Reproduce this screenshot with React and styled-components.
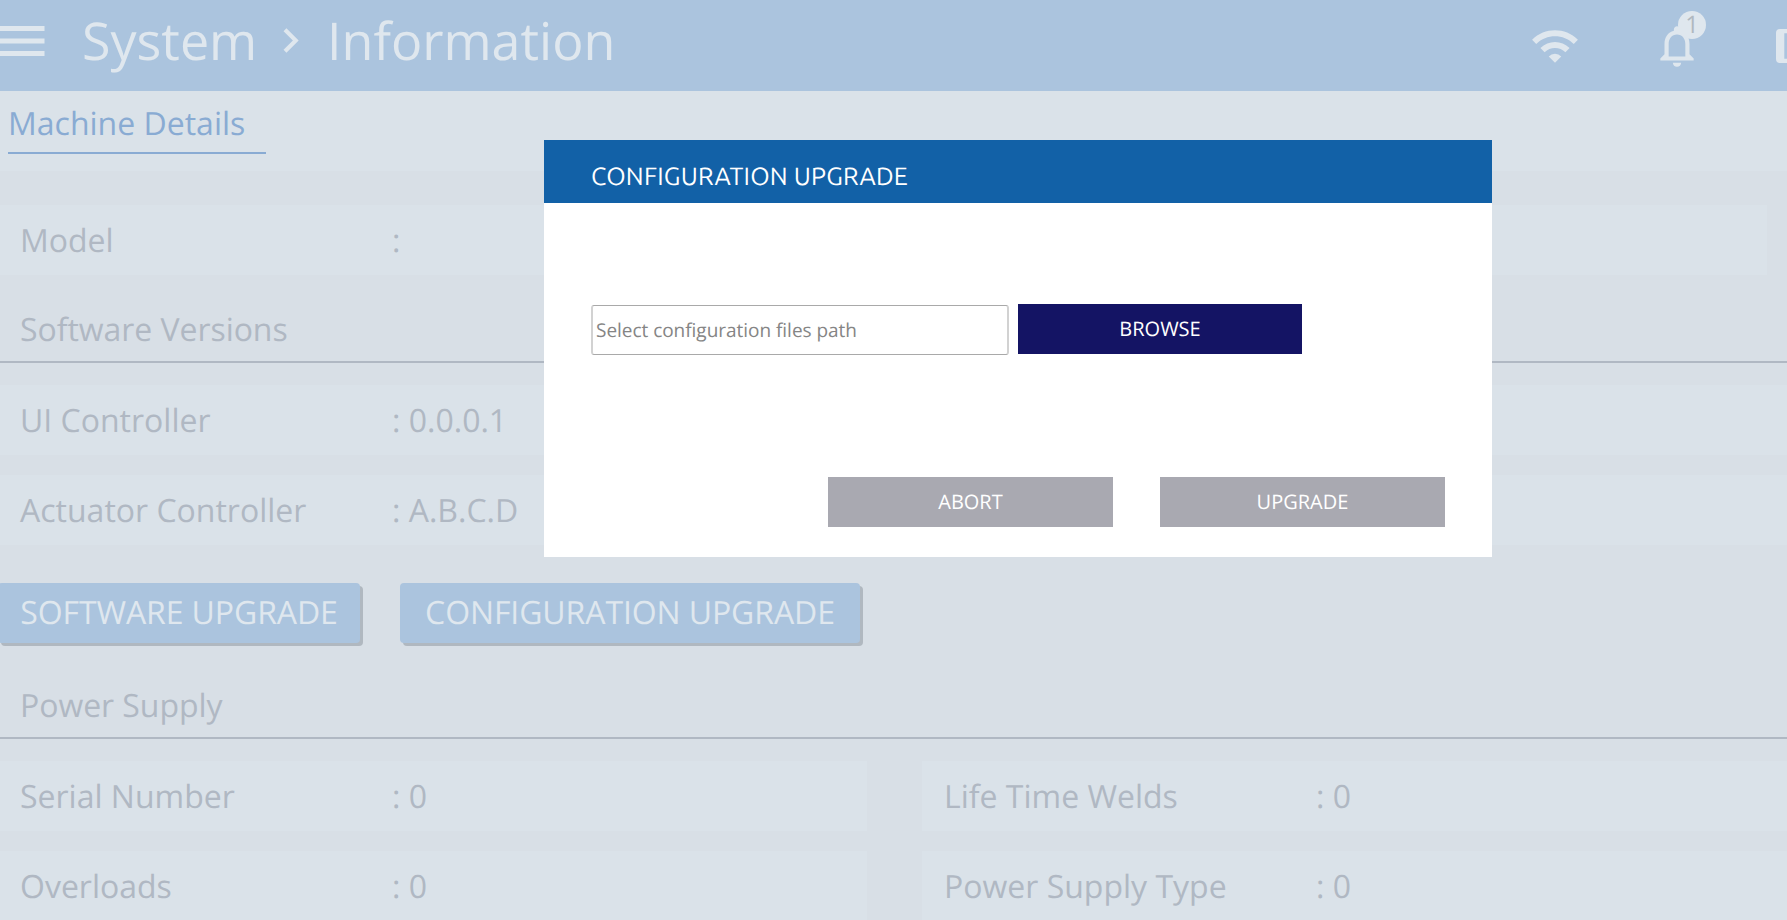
import React from "react";
import styled, { createGlobalStyle } from "styled-components";
import { MdMenu, MdChevronRight, MdWifi, MdNotificationsNone } from "react-icons/md";

const GlobalStyle = createGlobalStyle`
  * { box-sizing: border-box; }
  body { margin: 0; overflow: hidden; font-family: "Open Sans", "Noto Sans", sans-serif; }
`;

const Page = styled.div`
  position: relative;
  width: 1787px;
  height: 920px;
  overflow: hidden;
  background: #d8dfe6;
  color: #b0b8c3;
  font-size: 32px;
  font-weight: 400;
  white-space: nowrap;
  text-rendering: geometricPrecision;
`;

const Header = styled.header`
  display: flex;
  align-items: center;
  height: 91px;
  background: #abc4de;
  color: #dfe7ee;
  svg { display: block; flex: none; }
`;

const MenuButton = styled.div`
  width: 82px;
  height: 60px;
  margin-bottom: 9px;
  svg { margin-left: -8px; }
`;

const Crumb = styled.span`
  width: ${(p) => p.$width}px;
  font-size: 52px;
  line-height: 72px;
  margin-bottom: 10px;
`;

const Separator = styled.div`
  width: 61px;
  margin-bottom: 10px;
`;

const HeaderIcons = styled.div`
  display: flex;
  flex: none;
  gap: 72px;
  margin-left: auto;
  width: 257px;
  height: 50px;
`;

const Bell = styled.div`
  position: relative;
`;

const Badge = styled.span`
  position: absolute;
  left: 26px;
  top: -10px;
  width: 28px;
  height: 28px;
  border-radius: 50%;
  background: #dfe7ee;
  color: #b0b8c0;
  font-size: 24px;
  line-height: 28px;
  text-align: center;
`;

const Tabs = styled.nav`
  height: 80px;
  padding: 10px 8px;
  background: #dae2e9;
`;

const Tab = styled.div`
  width: 258px;
  height: 53px;
  line-height: 46px;
  border-bottom: 2px solid #89abd3;
  color: #89abd3;
`;

const Content = styled.main`
  padding-top: 34px;
`;

const Row = styled.div`
  display: flex;
  align-items: center;
  width: ${(p) => p.$width || "auto"};
  height: 70px;
  padding-left: ${(p) => p.$indent || 20}px;
  background: #dae2e9;
`;

const Label = styled.span`
  width: 372px;
`;

const SectionTitle = styled.h2`
  height: ${(p) => p.$height}px;
  margin: 0 0 22px;
  padding: 0 20px 9px;
  display: flex;
  align-items: flex-end;
  border-bottom: 2px solid #b0b8c3;
  font-size: 32px;
  font-weight: 400;
  letter-spacing: -0.05px;
  line-height: 44px;
`;

const Stack = styled.div`
  display: grid;
  gap: 20px;
`;

const Columns = styled.div`
  display: grid;
  grid-template-columns: 867px 865px;
  gap: 20px 55px;
`;

const Actions = styled.div`
  display: flex;
  gap: 40px;
  margin-top: 38px;
`;

const RaisedButton = styled.button`
  width: ${(p) => p.$width}px;
  height: 60px;
  margin: 0 0 0 ${(p) => p.$offset || 0}px;
  padding: 0;
  border: 0;
  border-radius: 4px;
  background: #abc4de;
  box-shadow: 3px 3px 0 #b0b8c0;
  color: #dfe7ee;
  font: 400 32px/60px "Open Sans", sans-serif;
  letter-spacing: -0.1px;
  text-rendering: inherit;
  white-space: nowrap;
`;

const Dialog = styled.section`
  position: absolute;
  left: 544px;
  top: 140px;
  width: 948px;
  height: 417px;
  display: flex;
  flex-direction: column;
  background: #fff;
`;

const DialogTitle = styled.div`
  height: 63px;
  padding: 9px 0 0 47px;
  background: #1261a7;
  color: #fff;
  font-family: Ubuntu, "Open Sans", sans-serif;
  font-size: 25px;
  letter-spacing: 0.2px;
  line-height: 54px;
`;

const FileRow = styled.div`
  display: flex;
  gap: 9px;
  padding: 101px 0 0 47px;
`;

const PathInput = styled.input`
  width: 418px;
  height: 50px;
  margin: 1px 0 0;
  padding: 1px 2px 1px 3px;
  border: solid;
  border-width: 1px 2px;
  border-color: #a9a9a9 #d2d2d2;
  border-radius: 3px;
  outline: 0;
  font: 400 19px "Open Sans", sans-serif;
  letter-spacing: -0.03px;
  text-rendering: inherit;
  &::placeholder { color: #858585; opacity: 1; }
`;

const DialogButton = styled.button`
  width: ${(p) => (p.$primary ? 284 : 285)}px;
  height: 50px;
  padding: 0;
  border: 0;
  background: ${(p) => (p.$primary ? "#141464" : "#a9a9b1")};
  color: #fff;
  font: 400 20px/50px "Open Sans", sans-serif;
  text-rendering: inherit;
`;

const DialogFooter = styled.div`
  display: flex;
  justify-content: flex-end;
  gap: 47px;
  margin-top: auto;
  padding: 0 47px 30px;
`;

const Field = ({ label, value, width, indent }) => (
  <Row $width={width} $indent={indent}>
    <Label>{label}</Label>
    <span>: {value}</span>
  </Row>
);

export default function App() {
  return (
    <Page>
      <GlobalStyle />
      <Header>
        <MenuButton><MdMenu size={60} /></MenuButton>
        <Crumb $width={184}>System</Crumb>
        <Separator><MdChevronRight size={49} /></Separator>
        <Crumb $width={300}>Information</Crumb>
        <HeaderIcons>
          <MdWifi size={50} />
          <Bell>
            <MdNotificationsNone size={50} />
            <Badge>1</Badge>
          </Bell>
          <svg width="50" height="50" viewBox="0 0 50 50">
            <path
              fill="currentColor"
              fillRule="evenodd"
              d="M6 8h38a4 4 0 0 1 4 4v26a4 4 0 0 1-4 4H6a4 4 0 0 1-4-4V12a4 4 0 0 1 4-4zM10.3 12.2v25.6h29.4V12.2z"
            />
          </svg>
        </HeaderIcons>
      </Header>
      <Tabs><Tab>Machine Details</Tab></Tabs>
      <Content>
        <Field label="Model" value="" width="1767px" />
        <SectionTitle $height={88}>Software Versions</SectionTitle>
        <Stack>
          <Field label="UI Controller" value="0.0.0.1" />
          <Field label="Actuator Controller" value="A.B.C.D" />
        </Stack>
        <Actions>
          <RaisedButton $width={362} $offset={-2}>SOFTWARE UPGRADE</RaisedButton>
          <RaisedButton $width={460}>CONFIGURATION UPGRADE</RaisedButton>
        </Actions>
        <SectionTitle $height={96}>Power Supply</SectionTitle>
        <Columns>
          <Field label="Serial Number" value="0" />
          <Field label="Life Time Welds" value="0" indent={22} />
          <Field label="Overloads" value="0" />
          <Field label="Power Supply Type" value="0" indent={22} />
        </Columns>
      </Content>
      <Dialog>
        <DialogTitle>CONFIGURATION UPGRADE</DialogTitle>
        <FileRow>
          <PathInput placeholder="Select configuration files path" readOnly />
          <DialogButton $primary>BROWSE</DialogButton>
        </FileRow>
        <DialogFooter>
          <DialogButton>ABORT</DialogButton>
          <DialogButton>UPGRADE</DialogButton>
        </DialogFooter>
      </Dialog>
    </Page>
  );
}
